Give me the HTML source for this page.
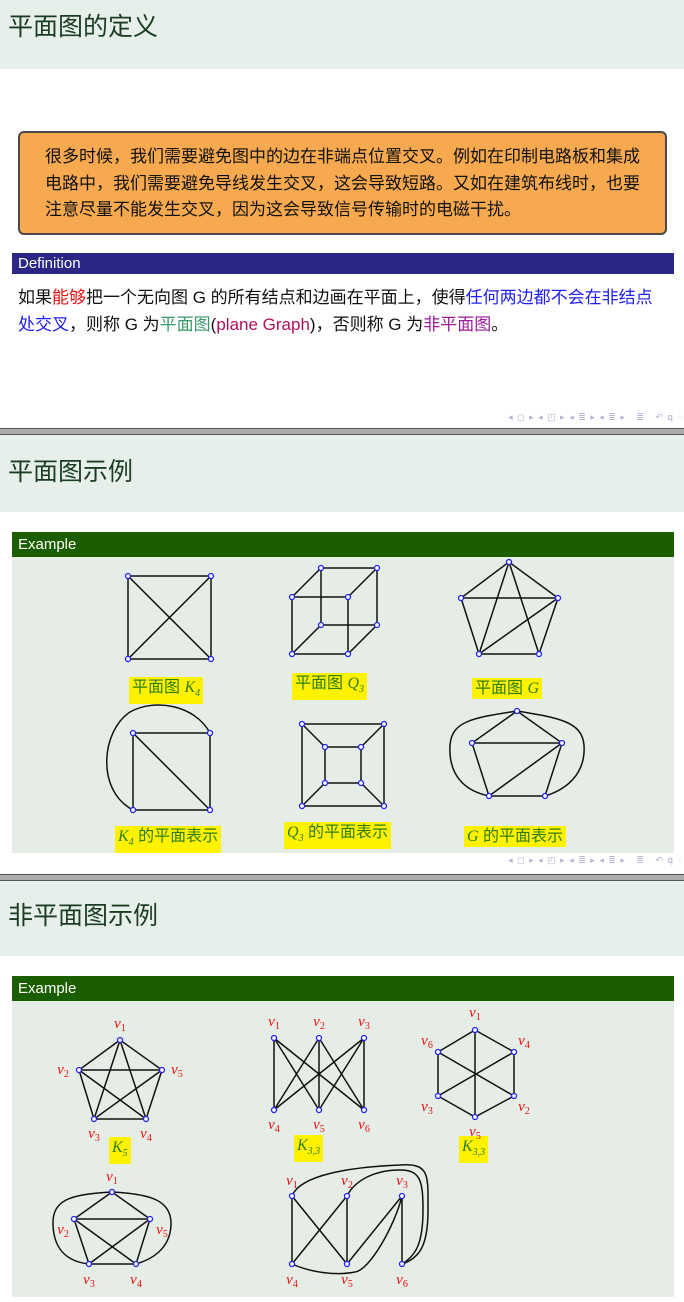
<!DOCTYPE html>
<html><head><meta charset="utf-8">
<style>
*{margin:0;padding:0;box-sizing:border-box}
body{width:684px;height:1302px;position:relative;background:#fff;font-family:"Liberation Sans","Noto Sans CJK SC",sans-serif;overflow:hidden}
.abs{position:absolute}
.hdr{position:absolute;left:0;width:684px;background:#e6efe9}
.title{position:absolute;left:8px;font-size:25px;color:#1b3d24;white-space:nowrap}
.sep{position:absolute;left:0;width:684px;height:7px;background:#acacac;border-top:1px solid #555;border-bottom:1px solid #555}
.bar{position:absolute;left:12px;width:662px;color:#fff;font-size:15px;padding-left:6px}
.body{position:absolute;left:12px;width:662px;background:#e6ede6}
.nav{position:absolute;right:0;font-size:9px;color:#b6b6d6;letter-spacing:1px;white-space:nowrap}
.hl{position:absolute;background:#fff200;color:#2e7d10;font-size:16px;white-space:nowrap;padding:0 3px;line-height:21px}
.hl i{font-family:"Liberation Serif",serif}
</style></head><body>

<div class="hdr" style="top:0;height:69px"></div>
<div class="title" style="top:7px">平面图的定义</div>
<div class="abs" style="left:18px;top:131px;width:649px;height:104px;background:#f6a94f;border:2px solid #4a4a4a;border-radius:6px;padding:11px 0 0 25px;font-size:17px;line-height:26.5px;color:#111;white-space:nowrap">很多时候，我们需要避免图中的边在非端点位置交叉。例如在印制电路板和集成<br>电路中，我们需要避免导线发生交叉，这会导致短路。又如在建筑布线时，也要<br>注意尽量不能发生交叉，因为这会导致信号传输时的电磁干扰。</div>
<div class="bar" style="top:253px;height:21px;background:#2a2785;line-height:21px">Definition</div>
<div class="abs" style="left:18px;top:284px;width:660px;font-size:17px;line-height:27px;color:#111;white-space:nowrap">如果<span style="color:#e81010">能够</span>把一个无向图 G 的所有结点和边画在平面上，使得<span style="color:#2020f0">任何两边都不会在非结点</span><br><span style="color:#2020f0">处交叉</span>，则称 G 为<span style="color:#3a9a6a">平面图</span>(<span style="color:#b0105a">plane Graph</span>)，否则称 G 为<span style="color:#9a1a9a">非平面图</span>。</div>
<div class="nav" style="top:412px">◂ ◻ ▸ ◂ ◰ ▸ ◂ ≣ ▸ ◂ ≣ ▸ &nbsp; ≣ &nbsp; ↶ 𝗊 ◌</div>
<div class="sep" style="top:428px"></div>

<div class="hdr" style="top:435px;height:77px"></div>
<div class="title" style="top:452px">平面图示例</div>
<div class="bar" style="top:532px;height:25px;background:#1a5e00;line-height:25px">Example</div>
<div class="body" style="top:557px;height:296px"></div>
<div class="nav" style="top:855px">◂ ◻ ▸ ◂ ◰ ▸ ◂ ≣ ▸ ◂ ≣ ▸ &nbsp; ≣ &nbsp; ↶ 𝗊 ◌</div>
<div class="sep" style="top:874px"></div>

<div class="hdr" style="top:881px;height:75px"></div>
<div class="title" style="top:896px">非平面图示例</div>
<div class="bar" style="top:976px;height:25px;background:#1a5e00;line-height:25px">Example</div>
<div class="body" style="top:1001px;height:296px"></div>

<div class="hl" style="left:129px;top:677px">平面图 <i>K<sub style="font-size:10px">4</sub></i></div>
<div class="hl" style="left:292px;top:673px">平面图 <i>Q<sub style="font-size:10px">3</sub></i></div>
<div class="hl" style="left:472px;top:678px">平面图 <i>G</i></div>
<div class="hl" style="left:115px;top:826px"><i>K<sub style="font-size:10px">4</sub></i> 的平面表示</div>
<div class="hl" style="left:284px;top:822px"><i>Q<sub style="font-size:10px">3</sub></i> 的平面表示</div>
<div class="hl" style="left:464px;top:826px"><i>G</i> 的平面表示</div>
<div class="hl" style="left:109px;top:1137px"><i>K<sub style="font-size:10px">5</sub></i></div>
<div class="hl" style="left:294px;top:1135px"><i>K<sub style="font-size:10px">3,3</sub></i></div>
<div class="hl" style="left:459px;top:1136px"><i>K<sub style="font-size:10px">3,3</sub></i></div>

<svg class="abs" style="left:0;top:0" width="684" height="1302" viewBox="0 0 684 1302">
<g stroke="#111" stroke-width="1.5" fill="none">
<path d="M128,576H211V659H128Z M128,576L211,659 M211,576L128,659"/>
<path d="M321,568H377V625H321Z M292,597H348V654H292Z M321,568L292,597 M377,568L348,597 M321,625L292,654 M377,625L348,654"/>
<path d="M509,562L461,598L479,654L539,654L558,598Z M461,598H558 M509,562L479,654 M509,562L539,654 M479,654L558,598"/>
<path d="M133,733H210V810H133Z M133,733L210,810 M133,810C95,790 102,730 130,712C155,698 195,705 210,733"/>
<path d="M302,724H384V806H302Z M325,747H361V783H325Z M302,724L325,747 M384,724L361,747 M302,806L325,783 M384,806L361,783"/>
<path d="M517,711L472,743L489,796H545L562,743Z M472,743H562 M489,796L562,743 M517,711C470,718 452,722 450,745C448,780 470,792 489,796 M517,711C560,718 582,722 584,745C586,775 565,790 545,796"/>
<path d="M120,1040L79,1070L94,1119H146L162,1070Z M79,1070H162 M120,1040L94,1119 M120,1040L146,1119 M79,1070L146,1119 M162,1070L94,1119"/>
<path d="M274,1038V1110 M319,1038V1110 M364,1038V1110 M274,1038L319,1110 M274,1038L364,1110 M319,1038L274,1110 M319,1038L364,1110 M364,1038L274,1110 M364,1038L319,1110"/>
<path d="M475,1030L514,1052V1096L475,1117L438,1096V1052Z M475,1030V1117 M438,1052L514,1096 M514,1052L438,1096"/>
<path d="M112,1192L74,1219L89,1264H136L150,1219Z M74,1219H150 M74,1219L136,1264 M150,1219L89,1264 M112,1192C70,1194 52,1200 53,1225C54,1252 70,1262 89,1264 M112,1192C150,1194 172,1200 171,1225C170,1250 150,1260 136,1264"/>
<path d="M292,1196V1264 M347,1196V1264 M402,1196V1264 M292,1196L347,1264 M347,1196L292,1264 M402,1196L347,1264 M402,1196C395,1225 370,1270 355,1272C335,1276 310,1272 292,1264 M292,1196C300,1175 350,1167 400,1165C430,1163 428,1175 428,1210C428,1245 420,1258 402,1264 M347,1196C355,1180 375,1170 400,1170C420,1170 423,1180 423,1210C423,1245 415,1256 402,1264"/>
</g>
<g fill="#fff" stroke="#2222ee" stroke-width="1.3">
<circle cx="128" cy="576" r="2.5"/><circle cx="211" cy="576" r="2.5"/><circle cx="128" cy="659" r="2.5"/><circle cx="211" cy="659" r="2.5"/>
<circle cx="321" cy="568" r="2.5"/><circle cx="377" cy="568" r="2.5"/><circle cx="321" cy="625" r="2.5"/><circle cx="377" cy="625" r="2.5"/>
<circle cx="292" cy="597" r="2.5"/><circle cx="348" cy="597" r="2.5"/><circle cx="292" cy="654" r="2.5"/><circle cx="348" cy="654" r="2.5"/>
<circle cx="509" cy="562" r="2.5"/><circle cx="461" cy="598" r="2.5"/><circle cx="558" cy="598" r="2.5"/><circle cx="479" cy="654" r="2.5"/><circle cx="539" cy="654" r="2.5"/>
<circle cx="133" cy="733" r="2.5"/><circle cx="210" cy="733" r="2.5"/><circle cx="133" cy="810" r="2.5"/><circle cx="210" cy="810" r="2.5"/>
<circle cx="302" cy="724" r="2.5"/><circle cx="384" cy="724" r="2.5"/><circle cx="302" cy="806" r="2.5"/><circle cx="384" cy="806" r="2.5"/>
<circle cx="325" cy="747" r="2.5"/><circle cx="361" cy="747" r="2.5"/><circle cx="325" cy="783" r="2.5"/><circle cx="361" cy="783" r="2.5"/>
<circle cx="517" cy="711" r="2.5"/><circle cx="472" cy="743" r="2.5"/><circle cx="562" cy="743" r="2.5"/><circle cx="489" cy="796" r="2.5"/><circle cx="545" cy="796" r="2.5"/>
<circle cx="120" cy="1040" r="2.5"/><circle cx="79" cy="1070" r="2.5"/><circle cx="162" cy="1070" r="2.5"/><circle cx="94" cy="1119" r="2.5"/><circle cx="146" cy="1119" r="2.5"/>
<circle cx="274" cy="1038" r="2.5"/><circle cx="319" cy="1038" r="2.5"/><circle cx="364" cy="1038" r="2.5"/><circle cx="274" cy="1110" r="2.5"/><circle cx="319" cy="1110" r="2.5"/><circle cx="364" cy="1110" r="2.5"/>
<circle cx="475" cy="1030" r="2.5"/><circle cx="514" cy="1052" r="2.5"/><circle cx="514" cy="1096" r="2.5"/><circle cx="475" cy="1117" r="2.5"/><circle cx="438" cy="1096" r="2.5"/><circle cx="438" cy="1052" r="2.5"/>
<circle cx="112" cy="1192" r="2.5"/><circle cx="74" cy="1219" r="2.5"/><circle cx="150" cy="1219" r="2.5"/><circle cx="89" cy="1264" r="2.5"/><circle cx="136" cy="1264" r="2.5"/>
<circle cx="292" cy="1196" r="2.5"/><circle cx="347" cy="1196" r="2.5"/><circle cx="402" cy="1196" r="2.5"/><circle cx="292" cy="1264" r="2.5"/><circle cx="347" cy="1264" r="2.5"/><circle cx="402" cy="1264" r="2.5"/>
</g>
<g fill="#e81010" font-family="Liberation Serif,serif" font-style="italic" font-size="15" text-anchor="middle">
<text x="120" y="1028">v<tspan font-size="10" dy="3" font-style="normal">1</tspan></text>
<text x="63" y="1074">v<tspan font-size="10" dy="3" font-style="normal">2</tspan></text>
<text x="177" y="1074">v<tspan font-size="10" dy="3" font-style="normal">5</tspan></text>
<text x="94" y="1138">v<tspan font-size="10" dy="3" font-style="normal">3</tspan></text>
<text x="146" y="1138">v<tspan font-size="10" dy="3" font-style="normal">4</tspan></text>
<text x="274" y="1026">v<tspan font-size="10" dy="3" font-style="normal">1</tspan></text>
<text x="319" y="1026">v<tspan font-size="10" dy="3" font-style="normal">2</tspan></text>
<text x="364" y="1026">v<tspan font-size="10" dy="3" font-style="normal">3</tspan></text>
<text x="274" y="1129">v<tspan font-size="10" dy="3" font-style="normal">4</tspan></text>
<text x="319" y="1129">v<tspan font-size="10" dy="3" font-style="normal">5</tspan></text>
<text x="364" y="1129">v<tspan font-size="10" dy="3" font-style="normal">6</tspan></text>
<text x="475" y="1017">v<tspan font-size="10" dy="3" font-style="normal">1</tspan></text>
<text x="524" y="1045">v<tspan font-size="10" dy="3" font-style="normal">4</tspan></text>
<text x="427" y="1045">v<tspan font-size="10" dy="3" font-style="normal">6</tspan></text>
<text x="427" y="1111">v<tspan font-size="10" dy="3" font-style="normal">3</tspan></text>
<text x="524" y="1111">v<tspan font-size="10" dy="3" font-style="normal">2</tspan></text>
<text x="475" y="1136">v<tspan font-size="10" dy="3" font-style="normal">5</tspan></text>
<text x="112" y="1181">v<tspan font-size="10" dy="3" font-style="normal">1</tspan></text>
<text x="63" y="1234">v<tspan font-size="10" dy="3" font-style="normal">2</tspan></text>
<text x="162" y="1234">v<tspan font-size="10" dy="3" font-style="normal">5</tspan></text>
<text x="89" y="1284">v<tspan font-size="10" dy="3" font-style="normal">3</tspan></text>
<text x="136" y="1284">v<tspan font-size="10" dy="3" font-style="normal">4</tspan></text>
<text x="292" y="1185">v<tspan font-size="10" dy="3" font-style="normal">1</tspan></text>
<text x="347" y="1185">v<tspan font-size="10" dy="3" font-style="normal">2</tspan></text>
<text x="402" y="1185">v<tspan font-size="10" dy="3" font-style="normal">3</tspan></text>
<text x="292" y="1284">v<tspan font-size="10" dy="3" font-style="normal">4</tspan></text>
<text x="347" y="1284">v<tspan font-size="10" dy="3" font-style="normal">5</tspan></text>
<text x="402" y="1284">v<tspan font-size="10" dy="3" font-style="normal">6</tspan></text>
</g>
</svg>
</body></html>
